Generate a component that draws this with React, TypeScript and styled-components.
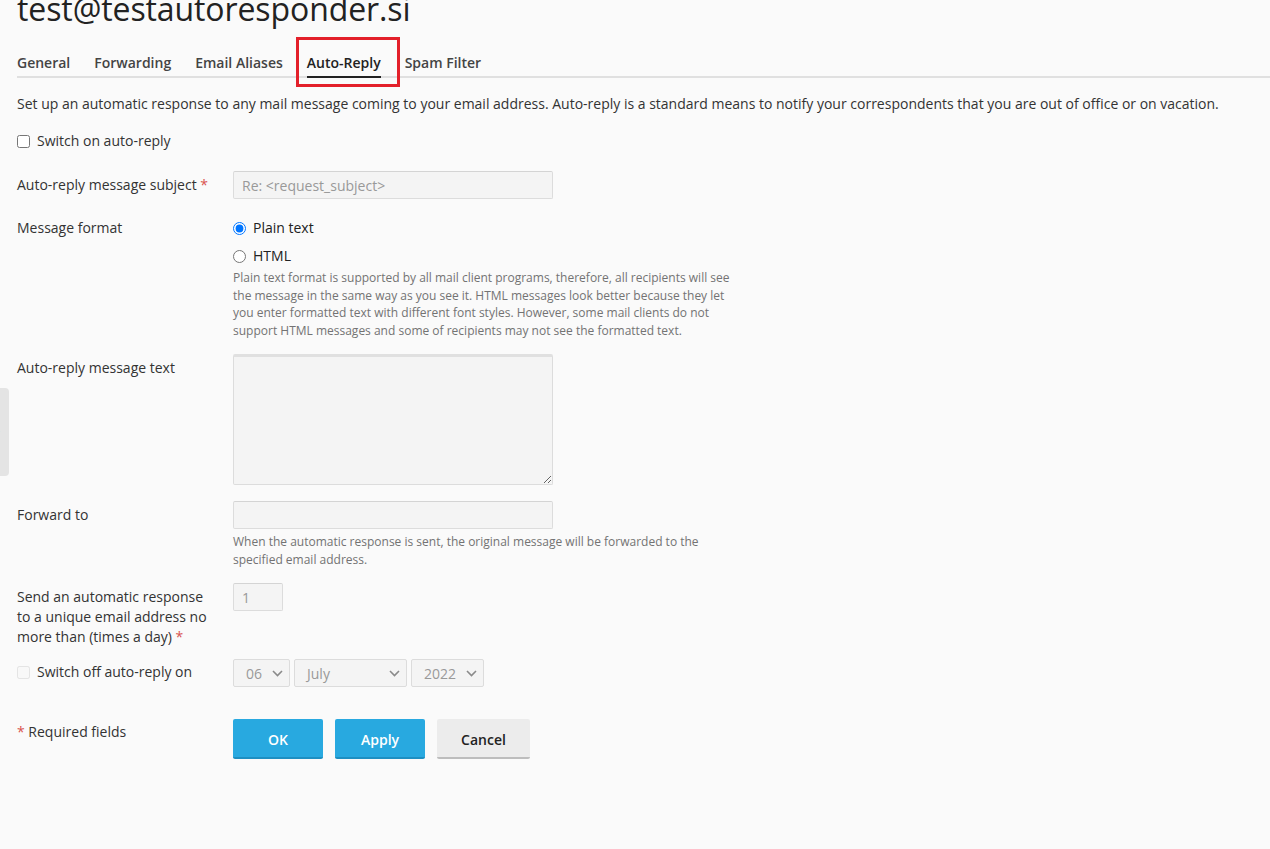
import React from "react";
import styled, { createGlobalStyle } from "styled-components";

const Global = createGlobalStyle`
  html, body { margin: 0; padding: 0; background: #fafafa; }
  body {
    font-family: "Open Sans", "Liberation Sans", sans-serif;
    font-size: 14px;
    color: #222;
    overflow: hidden;
  }
  * { box-sizing: border-box; }
`;

const Page = styled.div`
  position: relative;
  display: flow-root;
  height: 849px;
  padding: 0 0 0 17px;
`;

const SideHandle = styled.div`
  position: absolute;
  left: 0;
  top: 388px;
  width: 9px;
  height: 88px;
  background: #e4e4e4;
  border-radius: 0 4px 4px 0;
  display: flex;
  align-items: center;
  justify-content: flex-start;
  font-size: 10px;
  color: #555;
  overflow: hidden;
  span { margin-left: -3px; }
`;

const Title = styled.h1`
  margin: -11px 0 0 0;
  font-size: 32px;
  font-weight: 400;
  line-height: 40px;
  color: #222;
  letter-spacing: -0.1px;
`;

const Tabs = styled.nav`
  display: flex;
  gap: 24px;
  margin-top: 18px;
  border-bottom: 2px solid #e0e0e0;
`;

const Tab = styled.div<{ $active?: boolean }>`
  position: relative;
  font-size: 14px;
  font-weight: 600;
  color: ${(p) => (p.$active ? "#222" : "#444")};
  padding: 6px 0 4px;
  line-height: 19px;
  margin-bottom: -2px;
  border-bottom: 2px solid ${(p) => (p.$active ? "#222" : "transparent")};
`;

const Highlight = styled.div`
  position: absolute;
  left: -11px;
  right: -19px;
  top: -10px;
  bottom: -11px;
  border: 3px solid #e3202a;
  pointer-events: none;
`;

const Intro = styled.p`
  margin: 16px 0 0;
  line-height: 20px;
  color: #333;
`;

const CheckLine = styled.label<{ $disabled?: boolean }>`
  display: flex;
  align-items: center;
  gap: 7px;
  line-height: 20px;
  color: #333;
  input {
    margin: 0;
    width: 13px;
    height: 13px;
    opacity: ${(p) => (p.$disabled ? 0.5 : 1)};
  }
`;

const TopCheck = styled.div`
  margin-top: 17px;
`;

const Form = styled.div`
  margin-top: 20px;
  display: flex;
  flex-direction: column;
`;

const Row = styled.div<{ $mb: number }>`
  display: grid;
  grid-template-columns: 216px 1fr;
  margin-bottom: ${(p) => p.$mb}px;
`;

const Label = styled.div<{ $pt?: number }>`
  padding-top: ${(p) => p.$pt ?? 4}px;
  line-height: 20px;
  color: #333;
  padding-right: 20px;
`;

const Req = styled.span`
  color: #d9534f;
`;

const Field = styled.div`
  display: flex;
  flex-direction: column;
`;

const TextInput = styled.input<{ $w: number }>`
  width: ${(p) => p.$w}px;
  height: 28px;
  border: 1px solid #dcdcdc;
  border-top-color: #d4d4d4;
  background: #f4f4f4;
  border-radius: 2px;
  padding: 0 8px;
  font-family: inherit;
  font-size: 14px;
  color: #999;
  &::placeholder { color: #999; }
`;

const TextArea = styled.textarea`
  width: 320px;
  height: 131px;
  border: 1px solid #dcdcdc;
  border-top: 3px solid #e0e0e0;
  background: #f4f4f4;
  border-radius: 2px;
  font-family: inherit;
  resize: vertical;
`;

const Radios = styled.div`
  display: flex;
  flex-direction: column;
  gap: 8px;
`;

const RadioLine = styled.label`
  display: flex;
  align-items: center;
  gap: 7px;
  line-height: 20px;
  color: #222;
  input { margin: 0; width: 13px; height: 13px; }
`;

const Hint = styled.div<{ $mt: number }>`
  margin-top: ${(p) => p.$mt}px;
  width: 510px;
  font-size: 12px;
  line-height: 17.5px;
  color: #737373;
`;

const Selects = styled.div`
  display: flex;
  gap: 4px;
`;

const Select = styled.div<{ $w: number }>`
  width: ${(p) => p.$w}px;
  height: 28px;
  border: 1px solid #dcdcdc;
  background: #f4f4f4;
  border-radius: 2px;
  display: flex;
  align-items: center;
  justify-content: space-between;
  padding: 0 6px 0 12px;
  color: #999;
  font-size: 14px;
  svg { flex: none; }
`;

const Buttons = styled.div`
  display: flex;
  gap: 12px;
`;

const Button = styled.button<{ $primary?: boolean; $w: number }>`
  width: ${(p) => p.$w}px;
  height: 40px;
  border: none;
  border-radius: 2px;
  font-family: inherit;
  font-size: 14px;
  font-weight: 600;
  background: ${(p) => (p.$primary ? "#28a9e0" : "#ececec")};
  color: ${(p) => (p.$primary ? "#fff" : "#222")};
  border-bottom: 2px solid ${(p) => (p.$primary ? "#1d8fc2" : "#bdbdbd")};
  padding: 2px 0 0;
`;

const Chevron = () => (
  <svg width="11" height="7" viewBox="0 0 11 7">
    <path d="M1 1l4.5 4.5L10 1" fill="none" stroke="#8a8a8a" strokeWidth="1.6" />
  </svg>
);

export default function App() {
  return (
    <>
      <Global />
      <Page>
        <SideHandle><span>‹</span></SideHandle>
        <Title>test@testautoresponder.si</Title>
        <Tabs>
          <Tab>General</Tab>
          <Tab>Forwarding</Tab>
          <Tab>Email Aliases</Tab>
          <Tab $active>
            Auto-Reply
            <Highlight />
          </Tab>
          <Tab>Spam Filter</Tab>
        </Tabs>
        <Intro>
          Set up an automatic response to any mail message coming to your email address. Auto-reply is a standard means to notify your correspondents that you are out of office or on vacation.
        </Intro>
        <TopCheck>
          <CheckLine>
            <input type="checkbox" />
            Switch on auto-reply
          </CheckLine>
        </TopCheck>
        <Form>
          <Row $mb={19}>
            <Label>
              Auto-reply message subject <Req>*</Req>
            </Label>
            <Field>
              <TextInput $w={320} placeholder="Re: <request_subject>" disabled />
            </Field>
          </Row>
          <Row $mb={15}>
            <Label $pt={0}>Message format</Label>
            <Field>
              <Radios>
                <RadioLine>
                  <input type="radio" name="fmt" defaultChecked />
                  Plain text
                </RadioLine>
                <RadioLine>
                  <input type="radio" name="fmt" />
                  HTML
                </RadioLine>
              </Radios>
              <Hint $mt={3}>
                Plain text format is supported by all mail client programs, therefore, all recipients will see the message in the same way as you see it. HTML messages look better because they let you enter formatted text with different font styles. However, some mail clients do not support HTML messages and some of recipients may not see the formatted text.
              </Hint>
            </Field>
          </Row>
          <Row $mb={16}>
            <Label $pt={4}>Auto-reply message text</Label>
            <Field>
              <TextArea disabled />
            </Field>
          </Row>
          <Row $mb={15}>
            <Label>Forward to</Label>
            <Field>
              <TextInput $w={320} disabled />
              <Hint $mt={4}>
                When the automatic response is sent, the original message will be forwarded to the specified email address.
              </Hint>
            </Field>
          </Row>
          <Row $mb={12}>
            <Label>
              Send an automatic response to a unique email address no more than (times a day) <Req>*</Req>
            </Label>
            <Field>
              <TextInput $w={50} defaultValue="1" disabled />
            </Field>
          </Row>
          <Row $mb={32}>
            <Label $pt={3}>
              <CheckLine $disabled>
                <input type="checkbox" disabled />
                Switch off auto-reply on
              </CheckLine>
            </Label>
            <Field>
              <Selects>
                <Select $w={57}>06<Chevron /></Select>
                <Select $w={113}>July<Chevron /></Select>
                <Select $w={73}>2022<Chevron /></Select>
              </Selects>
            </Field>
          </Row>
          <Row $mb={0}>
            <Label $pt={3}>
              <Req>*</Req> Required fields
            </Label>
            <Field>
              <Buttons>
                <Button $primary $w={90}>OK</Button>
                <Button $primary $w={90}>Apply</Button>
                <Button $w={93}>Cancel</Button>
              </Buttons>
            </Field>
          </Row>
        </Form>
      </Page>
    </>
  );
}
